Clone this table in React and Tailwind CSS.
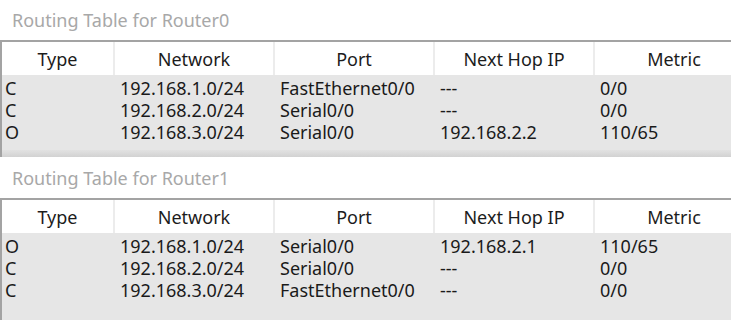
import React from 'react'

const cols = ['Type', 'Network', 'Port', 'Next Hop IP', 'Metric']

const router0 = [
  ['C', '192.168.1.0/24', 'FastEthernet0/0', '---', '0/0'],
  ['C', '192.168.2.0/24', 'Serial0/0', '---', '0/0'],
  ['O', '192.168.3.0/24', 'Serial0/0', '192.168.2.2', '110/65'],
]

const router1 = [
  ['O', '192.168.1.0/24', 'Serial0/0', '192.168.2.1', '110/65'],
  ['C', '192.168.2.0/24', 'Serial0/0', '---', '0/0'],
  ['C', '192.168.3.0/24', 'FastEthernet0/0', '---', '0/0'],
]

const grid = 'grid grid-cols-[113px_160px_160px_160px_160px]'

const RouteTable = ({ name, rows, bodyClass, footer }) => {
  return (
    <div className="flex flex-col">
      <div className="h-[40px] flex items-center pl-[12px] text-[18px] text-[#a8a8a8] bg-white">
        Routing Table for {name}
      </div>
      <div className="border-t-2 border-l-2 border-[#a3a3a3] overflow-hidden">
        <div className={`${grid} h-[33px] bg-white`}>
          {cols.map((c) => (
            <div key={c} className="flex items-center justify-center border-r-2 border-[#ececec] text-[18px] text-[#1c1c1c]">
              {c}
            </div>
          ))}
        </div>
        <div className={`bg-[#e6e6e6] pt-[2px] ${bodyClass}`}>
          {rows.map((r, i) => (
            <div key={i} className={`${grid} h-[22px] items-center text-[18px] text-[#1a1a1a]`}>
              {r.map((cell, j) => (
                <div key={j} className={j === 0 ? 'pl-[3px]' : 'pl-[5px]'}>
                  {cell}
                </div>
              ))}
            </div>
          ))}
        </div>
        {footer && <div className="h-[7px] bg-gradient-to-b from-[#e2e2e2] to-[#d2d2d2]" />}
      </div>
    </div>
  )
}

export default function App() {
  return (
    <div className="w-[731px] h-[322px] overflow-hidden bg-white leading-none" style={{ fontFamily: '"Noto Sans", "Open Sans", sans-serif' }}>
      <RouteTable name="Router0" rows={router0} bodyClass="h-[75px]" footer />
      <div className="h-px bg-white" />
      <RouteTable name="Router1" rows={router1} bodyClass="h-[87px]" />
    </div>
  )
}
